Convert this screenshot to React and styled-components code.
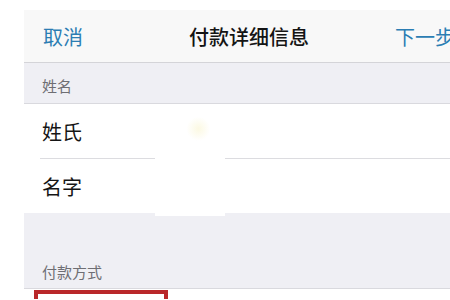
import React from 'react';
import styled, { createGlobalStyle } from 'styled-components';

const GlobalStyle = createGlobalStyle`
  html, body {
    margin: 0;
    padding: 0;
    background: #ffffff;
    overflow: hidden;
  }
  body {
    font-family: "Noto Sans CJK SC", "Noto Sans", sans-serif;
  }
`;

const Page = styled.div`
  padding: 10px 0 0 24px;
  width: 471px;
  height: 300px;
  box-sizing: border-box;
  position: relative;
  overflow: hidden;
`;

const Screen = styled.div`
  width: 447px;
  display: flex;
  flex-direction: column;
`;

const NavBar = styled.div`
  height: 52px;
  background: #f8f8f8;
  border-bottom: 1px solid #d4d4d8;
  display: grid;
  grid-template-columns: 1fr auto 1fr;
  align-items: center;
  padding: 0 16px 0 19px;
`;

const NavButton = styled.span`
  font-size: 20px;
  color: #2b7db3;
  justify-self: ${({ $align }) => ($align === 'right' ? 'end' : 'start')};
  white-space: nowrap;
`;

const NavTitle = styled.span`
  font-size: 20px;
  font-weight: 500;
  color: #141414;
`;

const SectionHeader = styled.div`
  height: ${({ $height }) => $height}px;
  background: #efeff4;
  border-bottom: 1px solid #d9d9de;
  display: flex;
  align-items: flex-end;
  padding: 0 0 ${({ $bottom }) => $bottom}px 18px;
  box-sizing: border-box;
  font-size: 15px;
  color: #6e6e73;
`;

const Row = styled.div`
  height: ${({ $height }) => $height}px;
  background: #ffffff;
  display: flex;
  align-items: center;
  padding-left: 18px;
  font-size: 20px;
  color: #151515;
  position: relative;
  ${({ $divider }) =>
    $divider &&
    `
    &::after {
      content: '';
      position: absolute;
      left: 16px;
      right: 0;
      bottom: 0;
      height: 1px;
      background: #dcdce0;
    }
  `}
`;

const Annotation = styled.div`
  margin: 1px 0 0 10px;
  width: 134px;
  height: 9px;
  border: 4px solid #b9272a;
  border-bottom: none;
  box-sizing: border-box;
`;

const Redaction = styled.div`
  position: absolute;
  left: 155px;
  top: 107px;
  width: 70px;
  height: 109px;
  background:
    radial-gradient(circle at 62% 20%, rgba(250, 246, 214, 0.7) 0, rgba(255, 255, 255, 0) 12px),
    #ffffff;
`;

export default function App() {
  return (
    <>
      <GlobalStyle />
      <Page>
        <Screen>
          <NavBar>
            <NavButton>取消</NavButton>
            <NavTitle>付款详细信息</NavTitle>
            <NavButton $align="right">下一步</NavButton>
          </NavBar>
          <SectionHeader $height={41} $bottom={7}>姓名</SectionHeader>
          <Row $height={55} $divider>姓氏</Row>
          <Row $height={54}>名字</Row>
          <SectionHeader $height={76} $bottom={6}>付款方式</SectionHeader>
          <Annotation />
        </Screen>
        <Redaction />
      </Page>
    </>
  );
}
